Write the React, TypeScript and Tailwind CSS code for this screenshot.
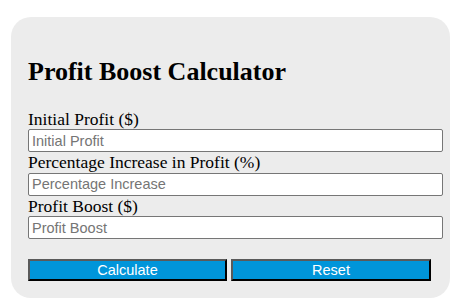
import React from 'react';

export default function App() {
  const fields = [
    { label: 'Initial Profit ($)', placeholder: 'Initial Profit' },
    { label: 'Percentage Increase in Profit (%)', placeholder: 'Percentage Increase' },
    { label: 'Profit Boost ($)', placeholder: 'Profit Boost' },
  ];

  return (
    <div className="w-[465px] h-[307px] bg-white pt-[17px] pl-[11px]">
      <div className="w-[439px] h-[281px] rounded-[20px] bg-[#ececec] px-[17px] pt-[40px] font-['Liberation_Serif',serif] text-black">
        {/* Title */}
        <h2 className="text-[26px] font-bold leading-[30px] m-0">Profit Boost Calculator</h2>

        {/* Fields */}
        <div className="mt-[21.5px]">
          {fields.map((f) => (
            <div key={f.label}>
              <label className="block text-[17.5px] leading-[20.5px]">{f.label}</label>
              <input
                type="text"
                placeholder={f.placeholder}
                className="block w-[415px] h-[23px] px-[3px] bg-white border border-[#767676] rounded-[2px] font-['Liberation_Sans',sans-serif] text-[14.5px] placeholder:text-[#757575] outline-none"
              />
            </div>
          ))}
        </div>

        {/* Buttons */}
        <div className="flex gap-[4px] mt-[20px]">
          <button className="w-[199px] h-[22px] bg-[#0095da] text-white font-['Liberation_Sans',sans-serif] text-[14.5px] leading-none border-2 border-t-[#5a5a5a] border-l-[#5a5a5a] border-b-black border-r-black">
            Calculate
          </button>
          <button className="w-[200px] h-[22px] bg-[#0095da] text-white font-['Liberation_Sans',sans-serif] text-[14.5px] leading-none border-2 border-t-[#5a5a5a] border-l-[#5a5a5a] border-b-black border-r-black">
            Reset
          </button>
        </div>
      </div>
    </div>
  );
}
